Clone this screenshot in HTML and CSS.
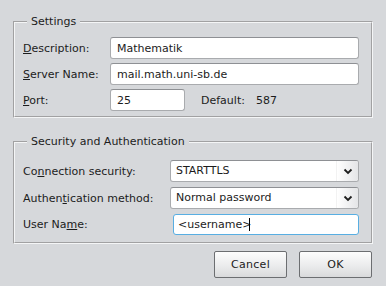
FILE: index.html
```html
<!DOCTYPE html>
<html>
<head>
    <title>Server Settings</title>
    <link rel="stylesheet" href="styles.css">
</head>
<body>
    <div class="dialog">
        <fieldset class="group">
            <legend>Settings</legend>
            <div class="form-grid settings-grid">
                <label for="description"><u>D</u>escription:</label>
                <input type="text" id="description" class="field" value="Mathematik">

                <label for="serverName"><u>S</u>erver Name:</label>
                <input type="text" id="serverName" class="field" value="mail.math.uni-sb.de">

                <label for="port"><u>P</u>ort:</label>
                <div class="port-row">
                    <input type="text" id="port" class="field port-field" value="25">
                    <span class="default-label">Default:</span>
                    <span class="default-value">587</span>
                </div>
            </div>
        </fieldset>

        <fieldset class="group security">
            <legend>Security and Authentication</legend>
            <div class="form-grid security-grid">
                <label>Co<u>n</u>nection security:</label>
                <div class="combo">
                    <span class="combo-value">STARTTLS</span>
                    <span class="combo-drop">
                        <svg width="10" height="7" viewBox="0 0 10 7"><path d="M1.5 1.5 L5 5 L8.5 1.5" fill="none" stroke="#1e1e1e" stroke-width="1.8"/></svg>
                    </span>
                </div>

                <label>Authen<u>t</u>ication method:</label>
                <div class="combo">
                    <span class="combo-value">Normal password</span>
                    <span class="combo-drop">
                        <svg width="10" height="7" viewBox="0 0 10 7"><path d="M1.5 1.5 L5 5 L8.5 1.5" fill="none" stroke="#1e1e1e" stroke-width="1.8"/></svg>
                    </span>
                </div>

                <label for="userName">User Na<u>m</u>e:</label>
                <div class="user-wrap">
                    <input type="text" id="userName" class="field focused" value="&lt;username&gt;">
                    <span class="caret"></span>
                </div>
            </div>
        </fieldset>

        <div class="button-group">
            <button class="btn">Cancel</button>
            <button class="btn">OK</button>
        </div>
    </div>
</body>
</html>
```

FILE: styles.css
```css
body {
    margin: 0;
    background-color: #d6d8db;
    font-family: 'DejaVu Sans', Verdana, sans-serif;
    font-size: 11px;
    color: #1c1c1c;
}
.dialog {
    padding: 15px 14px 0 13px;
    width: 360px;
}
.group {
    margin: 0;
    padding: 8px 12px 5px 8px;
    border: 2px groove #f4f5f6;
    border-radius: 0;
}
.group legend {
    padding: 0 4px;
    margin-left: 4px;
    line-height: 14px;
}
.security {
    margin-top: 17px;
    padding-top: 11px;
    padding-bottom: 7px;
}
.form-grid {
    display: grid;
    row-gap: 4px;
    align-items: center;
}
.settings-grid {
    grid-template-columns: 87px 1fr;
}
.security-grid {
    grid-template-columns: 147px 1fr;
    row-gap: 5px;
}
.form-grid label {
    white-space: nowrap;
}
.field {
    box-sizing: border-box;
    width: 100%;
    height: 22px;
    margin: 0;
    padding: 0 6px;
    border: 1px solid #a9abae;
    border-top-color: #8e9094;
    border-radius: 3px;
    background-color: #fff;
    font-family: inherit;
    font-size: 11px;
    color: #1c1c1c;
    outline: none;
}
.port-row {
    display: flex;
    align-items: center;
}
.port-field {
    width: 75px;
}
.default-label {
    margin-left: 16px;
}
.default-value {
    margin-left: 11px;
}
.combo {
    box-sizing: border-box;
    display: flex;
    align-items: stretch;
    height: 22px;
    border: 1px solid #a9abae;
    border-top-color: #8e9094;
    border-radius: 3px;
    background-color: #fff;
}
.combo-value {
    flex: 1;
    padding-left: 5px;
    line-height: 20px;
}
.combo-drop {
    width: 21px;
    display: flex;
    align-items: center;
    justify-content: center;
    border-radius: 0 2px 2px 0;
    background: linear-gradient(to right, #ffffff, #e4e5e7);
    border-left: 1px solid #f2f2f2;
}
.user-wrap {
    position: relative;
    margin-left: 3px;
}
.user-wrap .field {
    height: 21px;
    border: 1px solid #58aee2;
    border-radius: 3px;
    padding-left: 4px;
}
.caret {
    position: absolute;
    left: 76px;
    top: 4px;
    width: 1px;
    height: 13px;
    background-color: #000;
}
.button-group {
    display: flex;
    justify-content: flex-end;
    gap: 12px;
    margin-top: 7px;
    padding-right: 1px;
}
.btn {
    width: 73px;
    height: 27px;
    padding: 0;
    border: 1px solid #6c6e71;
    border-radius: 2px;
    background: linear-gradient(to bottom, #fdfdfd, #e9eaeb 60%, #d9dadc);
    font-family: inherit;
    font-size: 11px;
    color: #1c1c1c;
    letter-spacing: 0.3px;
}
```
